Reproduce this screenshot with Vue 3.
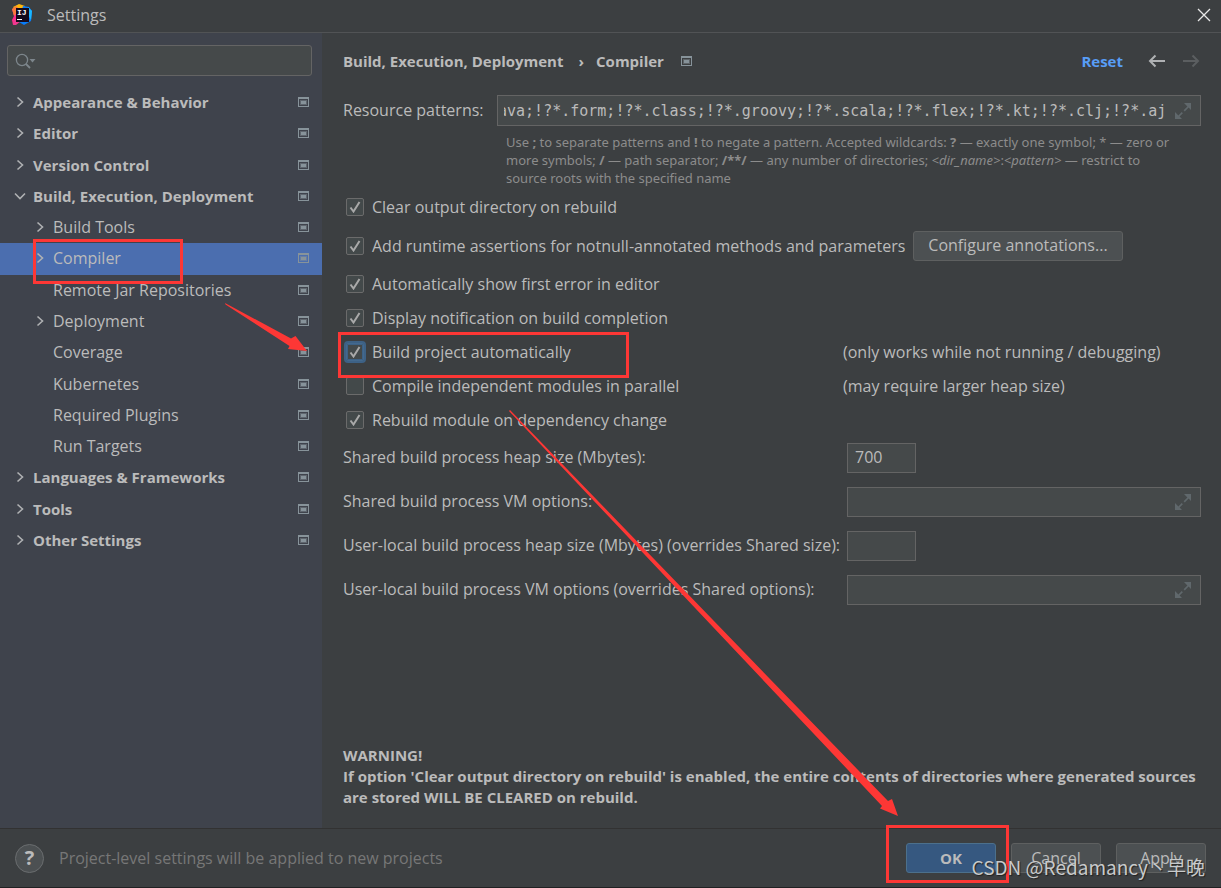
<script setup>
import { onMounted, ref } from 'vue'

const tree = [
  { label: 'Appearance & Behavior', level: 0, state: 'closed' },
  { label: 'Editor', level: 0, state: 'closed' },
  { label: 'Version Control', level: 0, state: 'closed' },
  { label: 'Build, Execution, Deployment', level: 0, state: 'open' },
  { label: 'Build Tools', level: 1, state: 'closed' },
  { label: 'Compiler', level: 1, state: 'closed', selected: true },
  { label: 'Remote Jar Repositories', level: 1 },
  { label: 'Deployment', level: 1, state: 'closed' },
  { label: 'Coverage', level: 1 },
  { label: 'Kubernetes', level: 1 },
  { label: 'Required Plugins', level: 1 },
  { label: 'Run Targets', level: 1 },
  { label: 'Languages & Frameworks', level: 0, state: 'closed' },
  { label: 'Tools', level: 0, state: 'closed' },
  { label: 'Other Settings', level: 0, state: 'closed' },
]

const options = ref([
  { id: 'clear', label: 'Clear output directory on rebuild', on: true },
  { id: 'assert', label: 'Add runtime assertions for notnull-annotated methods and parameters', on: true, button: 'Configure annotations...' },
  { id: 'first', label: 'Automatically show first error in editor', on: true },
  { id: 'notify', label: 'Display notification on build completion', on: true },
  { id: 'auto', label: 'Build project automatically', on: true, focused: true, note: '(only works while not running / debugging)' },
  { id: 'parallel', label: 'Compile independent modules in parallel', on: false, note: '(may require larger heap size)' },
  { id: 'rebuild', label: 'Rebuild module on dependency change', on: true },
])

const fields = ref([
  { id: 'heap', label: 'Shared build process heap size (Mbytes):', value: '700', wide: false },
  { id: 'vm', label: 'Shared build process VM options:', value: '', wide: true },
  { id: 'uheap', label: 'User-local build process heap size (Mbytes) (overrides Shared size):', value: '', wide: false },
  { id: 'uvm', label: 'User-local build process VM options (overrides Shared options):', value: '', wide: true },
])

const patterns = ref('ava;!?*.form;!?*.class;!?*.groovy;!?*.scala;!?*.flex;!?*.kt;!?*.clj;!?*.aj')
const patternsInput = ref(null)

onMounted(() => {
  patternsInput.value.scrollLeft = patternsInput.value.scrollWidth
})
</script>

<template>
  <div class="window">
    <header class="titlebar">
      <svg class="logo" width="22" height="22" viewBox="0 0 22 22" aria-hidden="true">
        <path d="M2 3 8 0l6 2-6 9z" fill="#fdb60d" />
        <path d="M1 5 6 3l5 8-9 10-1-5 2-4z" fill="#fe2a8a" />
        <path d="M1 5 5 2l3 5-5 5z" fill="#f97a3c" />
        <path d="M12 2l6 1 3 4-1 10-7 4-5-3z" fill="#087cfa" />
        <path d="M17 3l4 4-1 9-3-5z" fill="#19b8ff" />
        <path d="M2 21l1-6 7 2-5 4z" fill="#f0388f" />
        <rect x="5" y="4" width="13" height="14" fill="#140a1c" />
        <text x="6" y="11" class="logo-text">IJ</text>
        <rect x="6" y="15" width="5" height="1" fill="#fff" />
      </svg>
      <h1 class="title">Settings</h1>
      <button class="icon-button" type="button" aria-label="Close">
        <svg width="14" height="14" viewBox="0 0 14 14"><path d="M1 1l12 12M13 1L1 13" stroke="#e8e8e8" stroke-width="1.3" fill="none" /></svg>
      </button>
    </header>

    <div class="body">
      <aside class="sidebar">
        <label class="search">
          <svg width="22" height="16" viewBox="0 0 22 16" aria-hidden="true">
            <circle cx="7" cy="7" r="5.6" fill="none" stroke="#7d868c" stroke-width="1.3" />
            <path d="M11 11l4 4" stroke="#7d868c" stroke-width="1.8" />
            <path d="M14.500 6h6l-3 3.500z" fill="#7d868c" />
          </svg>
          <input type="text" aria-label="Search settings" />
        </label>
        <ul class="tree">
          <li v-for="item in tree" :key="item.label" :class="['node', 'level-' + item.level, { selected: item.selected }]">
            <svg class="chevron" width="12" height="12" viewBox="0 0 12 12" aria-hidden="true">
              <path v-if="item.state === 'closed'" d="M3.500 1.500L8.500 6l-5 4.500" />
              <path v-if="item.state === 'open'" d="M1 3.500l5 5 5-5" />
            </svg>
            <span class="node-label">{{ item.label }}</span>
            <svg class="scope" width="11" height="10" viewBox="0 0 11 10" aria-hidden="true">
              <path d="M0 0h11v10H0zM1 2v7h9V2z" fill-rule="evenodd" />
              <rect x="2" y="3" width="7" height="5" opacity="0.45" />
              <rect x="3" y="4" width="5" height="3" />
            </svg>
          </li>
        </ul>
      </aside>

      <main class="content">
        <div class="crumbs">
          <span>Build, Execution, Deployment</span>
          <span class="separator">›</span>
          <span>Compiler</span>
          <svg class="scope" width="11" height="10" viewBox="0 0 11 10" aria-hidden="true">
            <path d="M0 0h11v10H0zM1 2v7h9V2z" fill-rule="evenodd" />
            <rect x="2" y="3" width="7" height="5" opacity="0.45" />
            <rect x="3" y="4" width="5" height="3" />
          </svg>
          <a class="reset" href="#">Reset</a>
          <button class="icon-button" type="button" aria-label="Back">
            <svg width="18" height="14" viewBox="0 0 18 14"><path d="M17 7H2M7.500 1.500L2 7l5.500 5.500" stroke="#afb1b3" stroke-width="2" fill="none" /></svg>
          </button>
          <button class="icon-button" type="button" aria-label="Forward" disabled>
            <svg width="18" height="14" viewBox="0 0 18 14"><path d="M1 7h15M10.500 1.500L16 7l-5.500 5.500" stroke="#5b5e60" stroke-width="2" fill="none" /></svg>
          </button>
        </div>

        <div class="patterns">
          <label for="patterns">Resource patterns:</label>
          <div class="field expandable">
            <input id="patterns" ref="patternsInput" v-model="patterns" class="mono" type="text" />
            <svg width="16" height="16" viewBox="0 0 16 16" aria-hidden="true"><path d="M9 0h7v7l-2.400-2.400-3.800 3.800-1.200-1.200 3.800-3.800zM0 9v7h7l-2.400-2.400 3.300-3.300-1.200-1.200-3.300 3.300z" /></svg>
          </div>
        </div>
        <p class="hint">
          Use <b>;</b> to separate patterns and <b>!</b> to negate a pattern. Accepted wildcards: <b>?</b> — exactly one symbol; * — zero or<br />
          more symbols; <b>/</b> — path separator; <b>/**/</b> — any number of directories; <i>&lt;dir_name&gt;</i>:<i>&lt;pattern&gt;</i> — restrict to<br />
          source roots with the specified name
        </p>

        <div class="options">
          <div v-for="option in options" :key="option.id" :class="['option', { tall: option.button }]">
            <label class="check">
              <input v-model="option.on" type="checkbox" :class="{ focused: option.focused }" />
              <svg v-if="option.on" class="tick" width="12" height="12" viewBox="0 0 12 12" aria-hidden="true"><path d="M1.500 6.500l3 4 6-9.500" /></svg>
              <span>{{ option.label }}</span>
            </label>
            <button v-if="option.button" type="button" class="button configure">{{ option.button }}</button>
            <span v-if="option.note" class="note">{{ option.note }}</span>
          </div>
        </div>

        <div class="fields">
          <div v-for="field in fields" :key="field.id" class="field-row">
            <label :for="field.id">{{ field.label }}</label>
            <div :class="['field', field.wide ? 'expandable' : 'short']">
              <input :id="field.id" v-model="field.value" type="text" />
              <svg v-if="field.wide" width="16" height="16" viewBox="0 0 16 16" aria-hidden="true"><path d="M9 0h7v7l-2.400-2.400-3.800 3.800-1.200-1.200 3.800-3.800zM0 9v7h7l-2.400-2.400 3.300-3.300-1.200-1.200-3.300 3.300z" /></svg>
            </div>
          </div>
        </div>

        <p class="warning">
          WARNING!<br />
          If option 'Clear output directory on rebuild' is enabled, the entire contents of directories where generated sources<br />
          are stored WILL BE CLEARED on rebuild.
        </p>
      </main>
    </div>

    <footer class="footer">
      <button class="help" type="button">?</button>
      <span class="footer-note">Project-level settings will be applied to new projects</span>
      <button class="button primary" type="button">OK</button>
      <button class="button" type="button">Cancel</button>
      <button class="button" type="button">Apply</button>
    </footer>

    <svg class="annotations" width="1221" height="888" viewBox="0 0 1221 888" aria-hidden="true">
      <g fill="none" stroke="#fd3735" stroke-width="3">
        <rect x="34.500" y="240.500" width="147" height="42" />
        <rect x="339.500" y="333.500" width="288" height="43" />
        <rect x="887.500" y="826.500" width="120" height="55" />
      </g>
      <g fill="#fd3735">
        <path d="M225 303L291 338.500 295.500 336 307 351 288 349 289.500 346 225.500 304.500z" />
        <path d="M509 411L510 410 888 801 892 799 898 816 880 808.500 882 806z" />
      </g>
    </svg>
    <div class="watermark">CSDN @Redamancy丶早晚</div>
  </div>
</template>

<style>
body {
  background: #3c3f41;
}
</style>

<style scoped>
.window {
  position: relative;
  display: flex;
  flex-direction: column;
  box-sizing: border-box;
  min-height: 100vh;
  overflow: hidden;
  border-bottom: 1px solid #202122;
  background: #3c3f41;
  color: #bbbbbb;
  font: 16px/20px "Open Sans", "Noto Sans", sans-serif;
}
.window * {
  box-sizing: border-box;
}
button,
input {
  margin: 0;
  color: inherit;
  font: inherit;
}
.titlebar {
  display: flex;
  align-items: center;
  height: 33px;
  padding: 0 10px 3px 11px;
  border-bottom: 1px solid #515355;
}
.logo-text {
  fill: #fff;
  font: bold 8px "Liberation Mono", monospace;
}
.title {
  flex: 1;
  margin: 0 0 0 14px;
  font-size: 16px;
  font-weight: 400;
}
.icon-button {
  display: flex;
  padding: 0;
  border: 0;
  background: none;
}
.body {
  display: flex;
  flex: 1;
}
.sidebar {
  flex: none;
  width: 322px;
  background: #3f434c;
}
.search {
  display: flex;
  align-items: center;
  height: 31px;
  margin: 12px 10px 11px 7px;
  padding-left: 7px;
  border: 1px solid #646464;
  border-radius: 3px;
  background: #45494a;
}
.search input,
.field input {
  flex: 1;
  min-width: 0;
  height: 100%;
  padding: 0;
  border: 0;
  outline: 0;
  background: none;
}
.tree {
  display: grid;
  grid-auto-rows: 1fr;
  height: 469px;
  margin: 0;
  padding: 0;
  list-style: none;
}
.node {
  display: flex;
  align-items: center;
  padding: 0 13px 1px 14px;
}
.level-0 {
  font-size: 15px;
  font-weight: 700;
}
.level-1 {
  padding-left: 34px;
}
.selected {
  background: #4b6eaf;
}
.chevron {
  margin-right: 7px;
  fill: none;
  stroke: #afb1b3;
  stroke-width: 1.6;
}
.node-label {
  flex: 1;
}
.scope {
  fill: #87939a;
}
.content {
  flex: 1;
  display: flex;
  flex-direction: column;
  min-width: 0;
  padding: 18px 20px 20px 21px;
}
.crumbs {
  display: flex;
  align-items: center;
  height: 20px;
  padding-right: 1px;
  font-size: 15px;
  font-weight: 700;
}
.separator {
  margin: 0 12px 0 15px;
}
.crumbs .scope {
  margin-left: 17px;
}
.reset {
  margin-left: auto;
  color: #589df6;
  text-decoration: none;
}
.crumbs .icon-button {
  margin-left: 25px;
}
.crumbs .icon-button + .icon-button {
  margin-left: 16px;
}
.patterns {
  display: flex;
  align-items: center;
  margin-top: 24px;
}
.patterns label {
  width: 154px;
  padding-bottom: 2px;
}
.patterns .field {
  height: 31px;
}
.field {
  display: flex;
  align-items: center;
  height: 30px;
  padding: 0 6px;
  border: 1px solid #646464;
  background: #45494a;
}
.expandable {
  flex: 1;
  gap: 9px;
  padding-right: 9px;
}
.expandable svg {
  fill: #60686c;
}
.short {
  width: 69px;
}
.short input {
  padding: 0 1px 2px;
}
.field .mono {
  font: 15px/20px "DejaVu Sans Mono", monospace;
}
.hint {
  margin: 7px 0 0 163px;
  color: #8c8c8c;
  font-family: "Noto Sans", "Open Sans", sans-serif;
  font-size: 13px;
  line-height: 18px;
  white-space: nowrap;
}
.options {
  margin-top: 3px;
}
.option {
  display: flex;
  align-items: center;
  position: relative;
  height: 34px;
}
.tall {
  height: 43px;
}
.check {
  position: relative;
  display: flex;
  align-items: center;
  gap: 8px;
  padding-left: 3px;
  white-space: nowrap;
}
.check input {
  width: 18px;
  height: 18px;
  appearance: none;
  border: 1px solid #6b6b6b;
  border-radius: 2px;
  background: #43494a;
}
.check .focused {
  border-color: #43698e;
  box-shadow: 0 0 0 2px #3d6185, inset 0 0 0 1px #3d6185;
}
.tick {
  position: absolute;
  left: 6px;
  top: 4px;
  fill: none;
  stroke: #a9a9a9;
  stroke-width: 2;
}
.note {
  position: absolute;
  left: 500px;
}
.button {
  min-width: 90px;
  height: 30px;
  padding: 0 14px 1px;
  border: 1px solid #5e6060;
  border-radius: 3px;
  background: #4c5052;
}
.configure {
  margin-left: 8px;
}
.fields {
  display: grid;
  gap: 14px;
  margin-top: 6px;
}
.field-row {
  display: flex;
  align-items: center;
}
.field-row label {
  width: 504px;
  padding-bottom: 2px;
}
.warning {
  margin: auto 0 0;
  font-size: 15px;
  font-weight: 700;
  line-height: 21px;
  white-space: nowrap;
}
.footer {
  display: flex;
  align-items: center;
  height: 59px;
  padding: 0 15px;
  border-top: 1px solid #323232;
  gap: 15px;
}
.help {
  width: 29px;
  height: 29px;
  padding: 0;
  border: 1px solid #6a6d6f;
  border-radius: 50%;
  background: #4c5052;
  font-size: 20px;
  font-weight: 700;
}
.footer-note {
  flex: 1;
  color: #777777;
}
.primary {
  border-color: #4c708c;
  background: #365880;
  font-size: 15px;
  font-weight: 700;
}
.annotations {
  position: absolute;
  left: 0;
  top: 0;
  pointer-events: none;
}
.watermark {
  position: absolute;
  right: 16px;
  bottom: 6px;
  color: #c8cacb;
  font: 19px/28px "Noto Sans CJK SC", sans-serif;
  text-shadow: 1px 1px 1px #222;
  pointer-events: none;
}
</style>
